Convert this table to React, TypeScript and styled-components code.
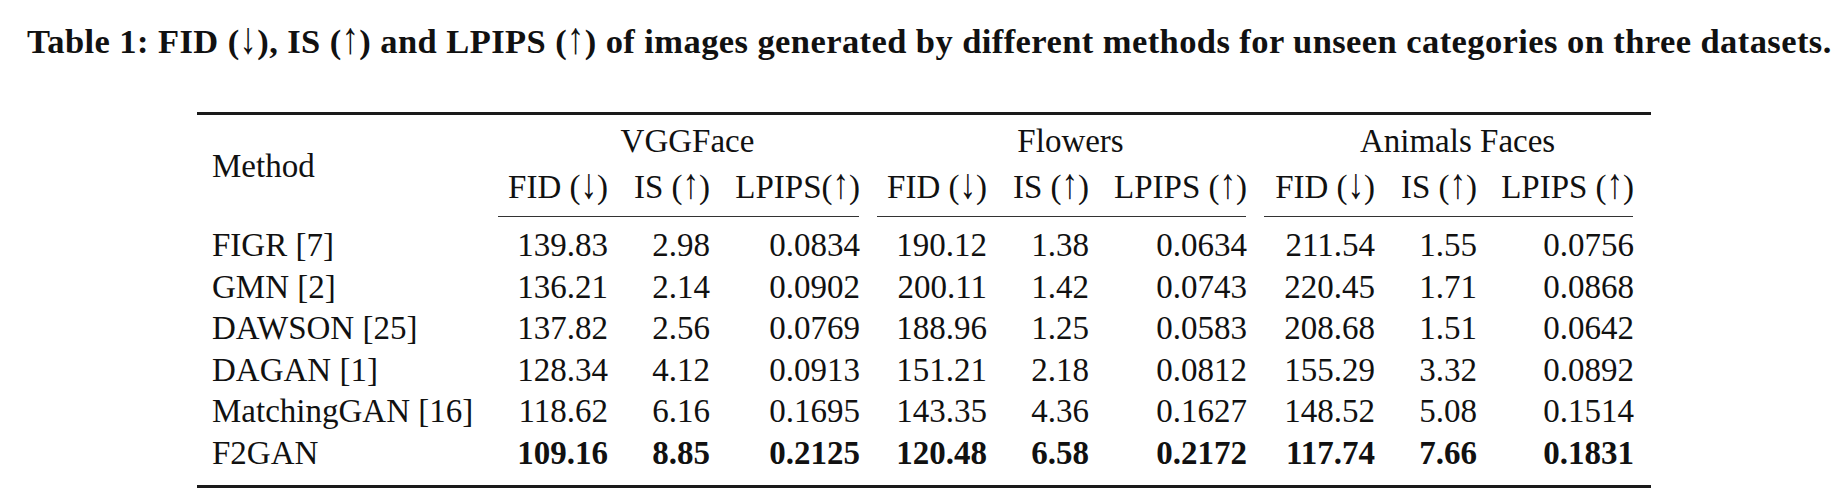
import React from 'react';
import styled, { createGlobalStyle } from 'styled-components';

const GlobalStyle = createGlobalStyle`
  html, body {
    margin: 0;
    padding: 0;
    background: #ffffff;
    overflow: hidden;
  }
  body {
    font-family: "Liberation Serif", "DejaVu Serif", serif;
    color: #111111;
  }
`;

const Page = styled.div`
  width: 1834px;
  height: 498px;
  padding-top: 21px;
  box-sizing: border-box;
`;

const Caption = styled.div`
  font-size: 34.5px;
  line-height: 40px;
  font-weight: bold;
  letter-spacing: 0.42px;
  white-space: nowrap;
  padding-left: 27px;
`;

// arrows in Liberation Serif are short; stretch them up from the baseline
const Arrow = styled.span`
  display: inline-block;
  transform: scaleY(1.3);
  transform-origin: 50% 80%;
  font-weight: normal;
`;

const RuleBox = styled.div`
  width: 1454px;
  margin: 51px 0 0 197px;
  border-top: 3px solid #1a1a1a;
  border-bottom: 3px solid #1a1a1a;
`;

const Table = styled.table`
  width: 100%;
  table-layout: fixed;
  border-collapse: separate;
  border-spacing: 0;
  font-size: 33px;
`;

const Col = styled.col<{ $w: number }>`
  width: ${({ $w }) => $w}px;
`;

const MethodHead = styled.th`
  font-weight: normal;
  text-align: left;
  vertical-align: middle;
  padding: 0 0 0 15px;
  line-height: 42px;
`;

const GroupHead = styled.th`
  font-weight: normal;
  text-align: center;
  line-height: 42px;
  padding: 5px 0 0;
`;

const SubHead = styled.th`
  font-weight: normal;
  text-align: right;
  white-space: nowrap;
  line-height: 42px;
  padding: 3.5px 17px 8.5px 0;
`;

const RuleRow = styled.tr`
  line-height: 0;
  td {
    padding: 0;
  }
`;

const MidRule = styled.div`
  height: 1px;
  background: #333333;
  margin-right: 18px;
`;

const NameCell = styled.td<{ $first?: boolean; $last?: boolean }>`
  text-align: left;
  white-space: nowrap;
  line-height: 41.5px;
  padding: ${({ $first, $last }) => `${$first ? 8 : 0}px 0 ${$last ? 11 : 0}px 15px`};
`;

const Cell = styled.td<{ $bold?: boolean; $first?: boolean; $last?: boolean }>`
  text-align: right;
  white-space: nowrap;
  font-weight: ${({ $bold }) => ($bold ? 'bold' : 'normal')};
  line-height: 41.5px;
  padding: ${({ $first, $last }) => `${$first ? 8 : 0}px 17px ${$last ? 11 : 0}px 0`};
`;

const widths = [301, 127, 102, 150, 127, 102, 158, 128, 102, 157];

const groups = ['VGGFace', 'Flowers', 'Animals Faces'];

const down = <Arrow>↓</Arrow>;
const up = <Arrow>↑</Arrow>;

const subHeads: React.ReactNode[] = [
  <>FID ({down})</>, <>IS ({up})</>, <>LPIPS({up})</>,
  <>FID ({down})</>, <>IS ({up})</>, <>LPIPS ({up})</>,
  <>FID ({down})</>, <>IS ({up})</>, <>LPIPS ({up})</>,
];

const rows: { name: string; values: string[]; best?: boolean }[] = [
  { name: 'FIGR [7]', values: ['139.83', '2.98', '0.0834', '190.12', '1.38', '0.0634', '211.54', '1.55', '0.0756'] },
  { name: 'GMN [2]', values: ['136.21', '2.14', '0.0902', '200.11', '1.42', '0.0743', '220.45', '1.71', '0.0868'] },
  { name: 'DAWSON [25]', values: ['137.82', '2.56', '0.0769', '188.96', '1.25', '0.0583', '208.68', '1.51', '0.0642'] },
  { name: 'DAGAN [1]', values: ['128.34', '4.12', '0.0913', '151.21', '2.18', '0.0812', '155.29', '3.32', '0.0892'] },
  { name: 'MatchingGAN [16]', values: ['118.62', '6.16', '0.1695', '143.35', '4.36', '0.1627', '148.52', '5.08', '0.1514'] },
  { name: 'F2GAN', values: ['109.16', '8.85', '0.2125', '120.48', '6.58', '0.2172', '117.74', '7.66', '0.1831'], best: true },
];

const App: React.FC = () => {
  return (
    <Page>
      <GlobalStyle />
      <Caption>
        Table 1: FID ({down}), IS ({up}) and LPIPS ({up}) of images generated by different methods for unseen categories on three datasets.
      </Caption>

      <RuleBox>
        <Table>
          <colgroup>
            {widths.map((w, i) => (
              <Col key={i} $w={w} />
            ))}
          </colgroup>
          <thead>
            <tr>
              <MethodHead rowSpan={2}>Method</MethodHead>
              {groups.map((g) => (
                <GroupHead key={g} colSpan={3}>{g}</GroupHead>
              ))}
            </tr>
            <tr>
              {subHeads.map((h, i) => (
                <SubHead key={i}>{h}</SubHead>
              ))}
            </tr>
            <RuleRow>
              <td />
              {groups.map((g) => (
                <td key={g} colSpan={3}>
                  <MidRule />
                </td>
              ))}
            </RuleRow>
          </thead>
          <tbody>
            {rows.map((r, ri) => {
              const first = ri === 0;
              const last = ri === rows.length - 1;
              return (
                <tr key={r.name}>
                  <NameCell $first={first} $last={last}>{r.name}</NameCell>
                  {r.values.map((v, vi) => (
                    <Cell key={vi} $bold={r.best} $first={first} $last={last}>
                      {v}
                    </Cell>
                  ))}
                </tr>
              );
            })}
          </tbody>
        </Table>
      </RuleBox>
    </Page>
  );
};

export default App;
